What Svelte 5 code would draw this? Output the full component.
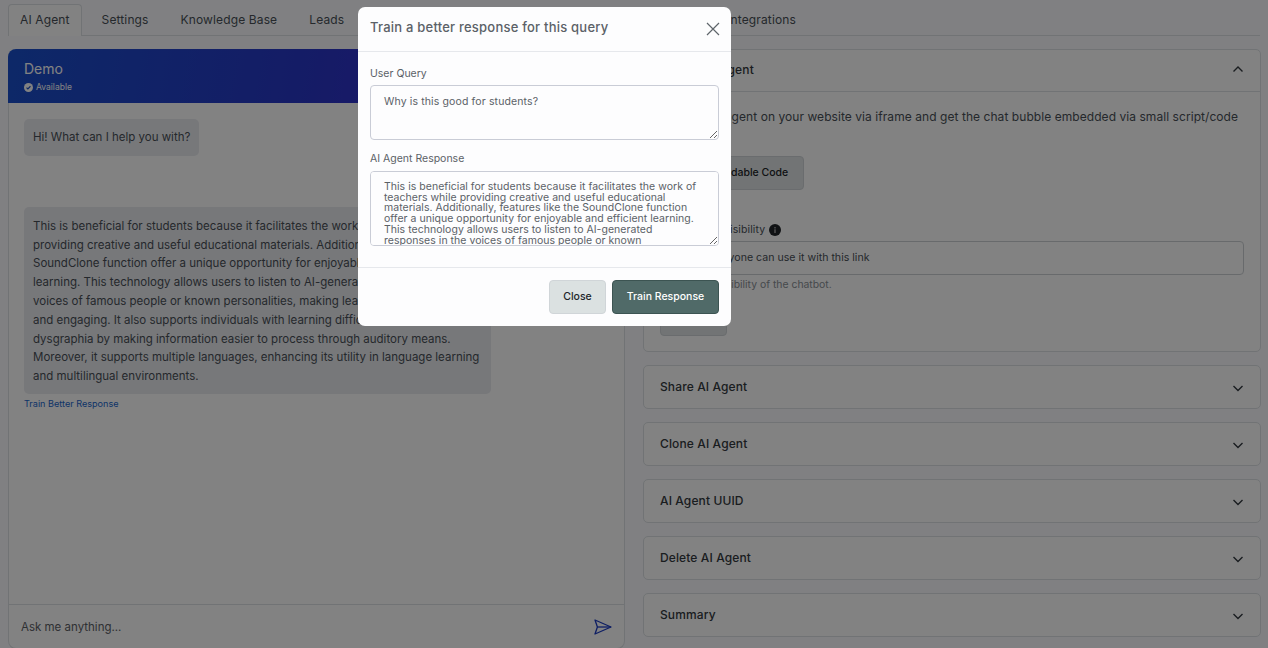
<script>
	let tabs = ['AI Agent', 'Settings', 'Knowledge Base', 'Leads', 'Integrations'];
	let sections = ['Share AI Agent', 'Clone AI Agent', 'AI Agent UUID', 'Delete AI Agent', 'Summary'];

	let answer = 'This is beneficial for students because it facilitates the work of teachers while providing creative and useful educational materials. Additionally, features like the SoundClone function offer a unique opportunity for enjoyable and efficient learning. This technology allows users to listen to AI-generated responses in the voices of famous people or known personalities, making learning more interesting and engaging. It also supports individuals with learning difficulties such as dysgraphia by making information easier to process through auditory means. Moreover, it supports multiple languages, enhancing its utility in language learning and multilingual environments.';
</script>

<div class="page">
	<div class="tabs">
		{#each tabs as tab, i}
			<div class="tab" class:active={i === 0} class:last={i === tabs.length - 1}>{tab}</div>
		{/each}
	</div>

	<div class="columns">
		<div class="chat">
			<div class="chat-head">
				<div class="chat-title">Demo</div>
				<div class="chat-status">
					<svg width="9" height="9" viewBox="0 0 16 16"><circle cx="8" cy="8" r="8" fill="currentColor"/><path d="M4.5 8.2l2.4 2.4 4.6-4.8" fill="none" stroke="#1a4fc4" stroke-width="2"/></svg>
					Available
				</div>
			</div>
			<div class="chat-body">
				<div class="bubble first">Hi! What can I help you with?</div>
				<div class="bubble long">{answer}</div>
				<div class="train-link">Train Better Response</div>
			</div>
			<div class="chat-input">
				<span>Ask me anything...</span>
				<svg width="18" height="16" viewBox="0 0 18 16" fill="none" stroke="#1c3cc4" stroke-width="1.3" stroke-linejoin="round"><path d="M1 1l16 7-16 7 2.4-7z"/><path d="M3.4 8H17"/></svg>
			</div>
		</div>

		<div class="side">
			<div class="panel">
				<div class="panel-head open">
					<span>Embed AI Agent</span>
					<svg class="chev" width="12" height="12" viewBox="0 0 12 12" fill="none" stroke="#343a40" stroke-width="1.4"><path d="M1.5 8.5L6 4l4.500 4.500"/></svg>
				</div>
				<div class="panel-body">
					<p>Embed the agent on your website via iframe and get the chat bubble embedded via small script/code snippet.</p>
					<button class="btn code">Get Embeddable Code</button>
					<div class="field-label">
						AI Assistant Visibility
						<svg width="12" height="12" viewBox="0 0 16 16"><circle cx="8" cy="8" r="8" fill="#212529"/><rect x="7" y="7" width="2" height="5" fill="#9a9a9a"/><rect x="7" y="4" width="2" height="2" fill="#9a9a9a"/></svg>
					</div>
					<div class="select">Public - anyone can use it with this link</div>
					<div class="hint">Control the visibility of the chatbot.</div>
					<button class="btn save">Save</button>
				</div>
			</div>

			{#each sections as section}
				<div class="panel">
					<div class="panel-head">
						<span>{section}</span>
						<svg class="chev" width="12" height="12" viewBox="0 0 12 12" fill="none" stroke="#343a40" stroke-width="1.4"><path d="M1.500 4L6 8.500 10.500 4"/></svg>
					</div>
				</div>
			{/each}
		</div>
	</div>
</div>

<div class="backdrop"></div>

<div class="modal">
	<div class="modal-head">
		<div class="modal-title">Train a better response for this query</div>
		<svg width="14" height="14" viewBox="0 0 14 14" fill="none" stroke="#5f656b" stroke-width="1.2"><path d="M1 1l12 12M13 1L1 13"/></svg>
	</div>
	<div class="modal-body">
		<label for="query">User Query</label>
		<textarea id="query" class="query" readonly value="Why is this good for students?"></textarea>
		<label for="response">AI Agent Response</label>
		<textarea id="response" class="response" readonly value={answer}></textarea>
	</div>
	<div class="modal-foot">
		<button class="btn close">Close</button>
		<button class="btn train">Train Response</button>
	</div>
</div>

<style>
	:global(body) {
		background: #fbfcff;
		overflow: hidden;
	}

	.page {
		height: 648px;
		padding: 4px 7px 0 8px;
		box-sizing: border-box;
		font-family: Inter, "Liberation Sans", sans-serif;
		color: #495057;
		overflow: hidden;
	}

	.tabs {
		display: flex;
		gap: 8px;
		height: 31px;
		margin-right: 1px;
		border-bottom: 1px solid #dee2e6;
	}

	.tab {
		padding: 0 11px;
		border: 1px solid transparent;
		border-bottom: 0;
		border-radius: 4px 4px 0 0;
		font-size: 12px;
		letter-spacing: 0.13px;
		line-height: 30px;
		height: 31px;
		box-sizing: border-box;
	}

	.tab.active {
		height: 32px;
		border-color: #dee2e6;
		background: #fff;
	}

	.tab.last {
		margin-left: 351px;
	}

	.columns {
		display: grid;
		grid-template-columns: 617px 618px;
		gap: 18px;
		margin-top: 13px;
	}

	.chat {
		height: 600px;
		box-sizing: border-box;
		display: flex;
		flex-direction: column;
		background: #fff;
		border: 1px solid #dee2e6;
		border-top: 0;
		border-radius: 8px;
	}

	.chat-head {
		height: 54px;
		margin: 0 -1px;
		padding: 11px 16px 0;
		box-sizing: border-box;
		border-radius: 8px 8px 0 0;
		background: linear-gradient(100deg, #1a50cc 0%, #2a36c8 50%, #4a22e0 100%);
		color: #fff;
	}

	.chat-title {
		font-size: 14px;
		line-height: 18px;
	}

	.chat-status {
		display: flex;
		align-items: center;
		gap: 3px;
		margin-top: 4px;
		font-size: 8.500px;
		line-height: 11px;
	}

	.chat-body {
		flex: 1;
		padding: 16px 15px;
	}

	.bubble {
		width: fit-content;
		max-width: 449px;
		padding: 9px;
		border-radius: 5px;
		background: #eaebf0;
		font-size: 11.500px;
		line-height: 18.800px;
	}

	.bubble.first {
		margin-bottom: 51px;
	}

	.bubble.long {
		padding: 10px 9px 8px;
	}

	.train-link {
		margin-top: 4px;
		font-size: 9.100px;
		line-height: 11px;
		color: #1a66cc;
	}

	.chat-input {
		height: 44px;
		display: flex;
		align-items: center;
		justify-content: space-between;
		padding: 0 12px;
		border-top: 1px solid #dee2e6;
		box-sizing: border-box;
		font-size: 11.500px;
		color: #5c6066;
	}

	.side {
		display: flex;
		flex-direction: column;
		gap: 13px;
	}

	.panel {
		background: #fff;
		border: 1px solid #dee2e6;
		border-radius: 5px;
	}

	.panel-head {
		height: 42px;
		display: flex;
		align-items: center;
		justify-content: space-between;
		padding: 0 16px 2px;
		font-size: 12px;
		font-weight: 500;
		letter-spacing: 0.12px;
		color: #343a40;
		box-sizing: border-box;
	}

	.chev {
		margin-top: 4px;
	}

	.panel-head.open {
		border-bottom: 1px solid #dee2e6;
	}

	.panel-head.open .chev {
		margin-top: -2px;
	}

	.panel-body {
		height: 259px;
		padding: 15px 16px 0;
		box-sizing: border-box;
		font-size: 12px;
	}

	.panel-body p {
		margin: 0 0 11px;
		line-height: 19px;
		letter-spacing: 0.06px;
	}

	.btn {
		display: block;
		height: 34px;
		padding: 0 0 1px;
		border: 1px solid #d0d5d8;
		border-radius: 4px;
		font-family: inherit;
		font-size: 10.500px;
		font-weight: 500;
		box-sizing: border-box;
	}

	.btn.code {
		width: 144px;
		background: #dfe3e5;
		color: #212529;
	}

	.field-label {
		display: flex;
		align-items: center;
		gap: 4px;
		margin-top: 33px;
		font-size: 10.500px;
		letter-spacing: 0.1px;
		line-height: 14px;
	}

	.select {
		height: 34px;
		margin-top: 4px;
		padding: 0 14px;
		border: 1px solid #cdd1d5;
		border-radius: 4px;
		font-size: 10.600px;
		line-height: 32px;
		box-sizing: border-box;
	}

	.hint {
		margin-top: 3px;
		font-size: 10.400px;
		line-height: 14px;
		color: #8a9096;
	}

	.btn.save {
		width: 67px;
		margin-top: 10px;
		background: #dfe3e5;
	}

	.backdrop {
		position: fixed;
		inset: 0;
		background: rgba(0, 0, 0, 0.49);
	}

	.modal {
		position: fixed;
		left: 358px;
		top: 7px;
		width: 373px;
		height: 319px;
		display: flex;
		flex-direction: column;
		background: #fdfdfe;
		border-radius: 7px;
		font-family: Inter, "Liberation Sans", sans-serif;
		color: #5b6167;
	}

	.modal-head {
		height: 45px;
		display: flex;
		align-items: center;
		justify-content: space-between;
		padding: 0 11px 4px 12px;
		border-bottom: 1px solid #e6e8ec;
		box-sizing: border-box;
	}

	.modal-head svg {
		margin-top: 4px;
	}

	.modal-title {
		font-size: 13px;
		font-weight: 500;
		letter-spacing: 0.22px;
	}

	.modal-body {
		flex: 1;
		padding: 15px 12px 0;
	}

	label {
		display: block;
		font-size: 10.500px;
		line-height: 14px;
		margin-bottom: 4px;
	}

	textarea {
		display: block;
		width: 349px;
		margin: 0 0 12px;
		padding: 11px 13px;
		box-sizing: border-box;
		border: 1px solid #c9ccd6;
		border-radius: 4px;
		background: #fdfdfe;
		color: #5b6167;
		font-family: inherit;
		font-size: 10.500px;
		line-height: 10.700px;
		scrollbar-width: none;
		outline: none;
	}

	.query {
		height: 55px;
		letter-spacing: 0.13px;
	}

	.response {
		height: 75px;
		margin: 5px 0 0;
		padding-top: 10px;
		letter-spacing: 0.03px;
	}

	.modal-foot {
		height: 59px;
		display: flex;
		justify-content: flex-end;
		align-items: flex-start;
		gap: 6px;
		padding: 12px 12px 0;
		border-top: 1px solid #e6e8ec;
		box-sizing: border-box;
	}

	.btn.close {
		width: 57px;
		background: #dbe1e1;
		color: #212529;
	}

	.btn.train {
		width: 107px;
		background: #506a68;
		border-color: #3c5452;
		color: #fff;
	}
</style>
